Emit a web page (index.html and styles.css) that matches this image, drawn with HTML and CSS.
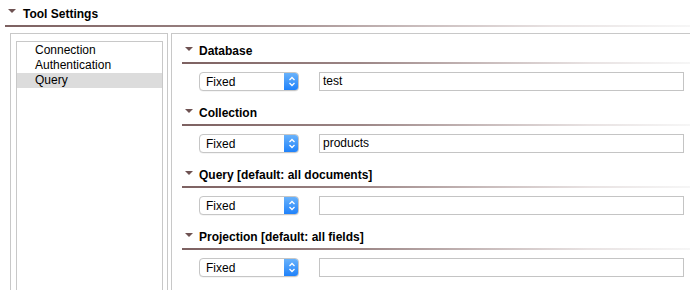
FILE: index.html
```html
<!DOCTYPE html>
<html>
<head>
<meta charset="utf-8">
<link rel="stylesheet" href="styles.css">
</head>
<body>
<div class="title">
  <span class="tri"></span><span class="title-text">Tool Settings</span>
</div>
<div class="main">
  <div class="left">
    <div class="list">
      <div class="item">Connection</div>
      <div class="item">Authentication</div>
      <div class="item selected">Query</div>
    </div>
  </div>
  <div class="right">
    <div class="section">
      <div class="sec-head"><span class="tri"></span><span class="sec-text">Database</span></div>
      <div class="row">
        <div class="select"><span class="sel-text">Fixed</span><span class="sel-btn"><svg width="8" height="11" viewBox="0 0 8 11"><path d="M1.5 4 L4 1.5 L6.5 4 M1.5 7 L4 9.5 L6.5 7" fill="none" stroke="#fff" stroke-width="1.3"/></svg></span></div>
        <div class="input">test</div>
      </div>
    </div>
    <div class="section">
      <div class="sec-head"><span class="tri"></span><span class="sec-text">Collection</span></div>
      <div class="row">
        <div class="select"><span class="sel-text">Fixed</span><span class="sel-btn"><svg width="8" height="11" viewBox="0 0 8 11"><path d="M1.5 4 L4 1.5 L6.5 4 M1.5 7 L4 9.5 L6.5 7" fill="none" stroke="#fff" stroke-width="1.3"/></svg></span></div>
        <div class="input">products</div>
      </div>
    </div>
    <div class="section">
      <div class="sec-head"><span class="tri"></span><span class="sec-text">Query [default: all documents]</span></div>
      <div class="row">
        <div class="select"><span class="sel-text">Fixed</span><span class="sel-btn"><svg width="8" height="11" viewBox="0 0 8 11"><path d="M1.5 4 L4 1.5 L6.5 4 M1.5 7 L4 9.5 L6.5 7" fill="none" stroke="#fff" stroke-width="1.3"/></svg></span></div>
        <div class="input"></div>
      </div>
    </div>
    <div class="section">
      <div class="sec-head"><span class="tri"></span><span class="sec-text">Projection [default: all fields]</span></div>
      <div class="row">
        <div class="select"><span class="sel-text">Fixed</span><span class="sel-btn"><svg width="8" height="11" viewBox="0 0 8 11"><path d="M1.5 4 L4 1.5 L6.5 4 M1.5 7 L4 9.5 L6.5 7" fill="none" stroke="#fff" stroke-width="1.3"/></svg></span></div>
        <div class="input"></div>
      </div>
    </div>
  </div>
</div>
</body>
</html>
```
FILE: styles.css
```css
html, body {
  margin: 0;
  padding: 0;
  background: #fff;
  overflow: hidden;
  height: 290px;
}
body {
  font-family: "Liberation Sans", Arial, sans-serif;
  font-size: 12px;
  color: #000;
}
.tri {
  display: inline-block;
  width: 0;
  height: 0;
  border-left: 4px solid transparent;
  border-right: 4px solid transparent;
  border-top: 4px solid #6e5252;
}
.title {
  margin-left: 5px;
  height: 25px;
  display: flex;
  align-items: center;
  position: relative;
}
.title .tri {
  margin-left: 3px;
  margin-top: -3px;
}
.title-text {
  font-weight: bold;
  margin-left: 7px;
  margin-top: 3px;
}
.title::after,
.sec-head::after {
  content: "";
  position: absolute;
  left: 0;
  right: 0;
  bottom: -2px;
  height: 2px;
  background: linear-gradient(90deg, #7d6161 0%, #9c8686 35%, #c9bcbc 60%, #e8e2e2 80%, #f6f6f6 100%);
}
.main {
  display: flex;
  margin-top: 8px;
  height: 260px;
}
.left {
  margin-left: 10px;
  width: 147px;
  border: 1px solid #c8c8c8;
  border-bottom: none;
  padding: 7px 4px 0 5px;
}
.list {
  border: 1px solid #c8c8c8;
  border-bottom: none;
  height: 100%;
  padding-top: 1px;
  box-sizing: border-box;
}
.item {
  height: 15px;
  line-height: 15px;
  padding-left: 18px;
  font-size: 12px;
}
.item.selected {
  background: #dcdcdc;
}
.right {
  margin-left: 3px;
  flex: 1;
  border-top: 1px solid #c8c8c8;
  border-left: 1px solid #c8c8c8;
  padding: 8px 0 0 10px;
}
.sec-head {
  position: relative;
  height: 20px;
  display: flex;
  align-items: center;
}
.sec-head .tri {
  margin-left: 3px;
  margin-top: -6px;
}
.sec-text {
  font-weight: bold;
  margin-left: 6px;
  margin-top: -2px;
}
.row {
  display: flex;
  align-items: center;
  margin: 10px 0 13px 17px;
  height: 19px;
}
.select {
  width: 100px;
  height: 19px;
  box-sizing: border-box;
  border: 1px solid #c6c6c6;
  border-radius: 4px;
  display: flex;
  align-items: center;
  justify-content: space-between;
  overflow: hidden;
  background: #fff;
  box-shadow: 0 0.5px 0.5px rgba(0,0,0,0.08);
}
.sel-text {
  padding-left: 6px;
  font-size: 12px;
}
.sel-btn {
  width: 15px;
  height: 19px;
  margin-right: -1px;
  background: linear-gradient(#6db5fb, #1b7ffa);
  display: flex;
  align-items: center;
  justify-content: center;
}
.input {
  margin-left: 20px;
  width: 365px;
  height: 19px;
  box-sizing: border-box;
  border: 1px solid #c4c4c4;
  padding-left: 3px;
  line-height: 17px;
  font-size: 12px;
}
```
